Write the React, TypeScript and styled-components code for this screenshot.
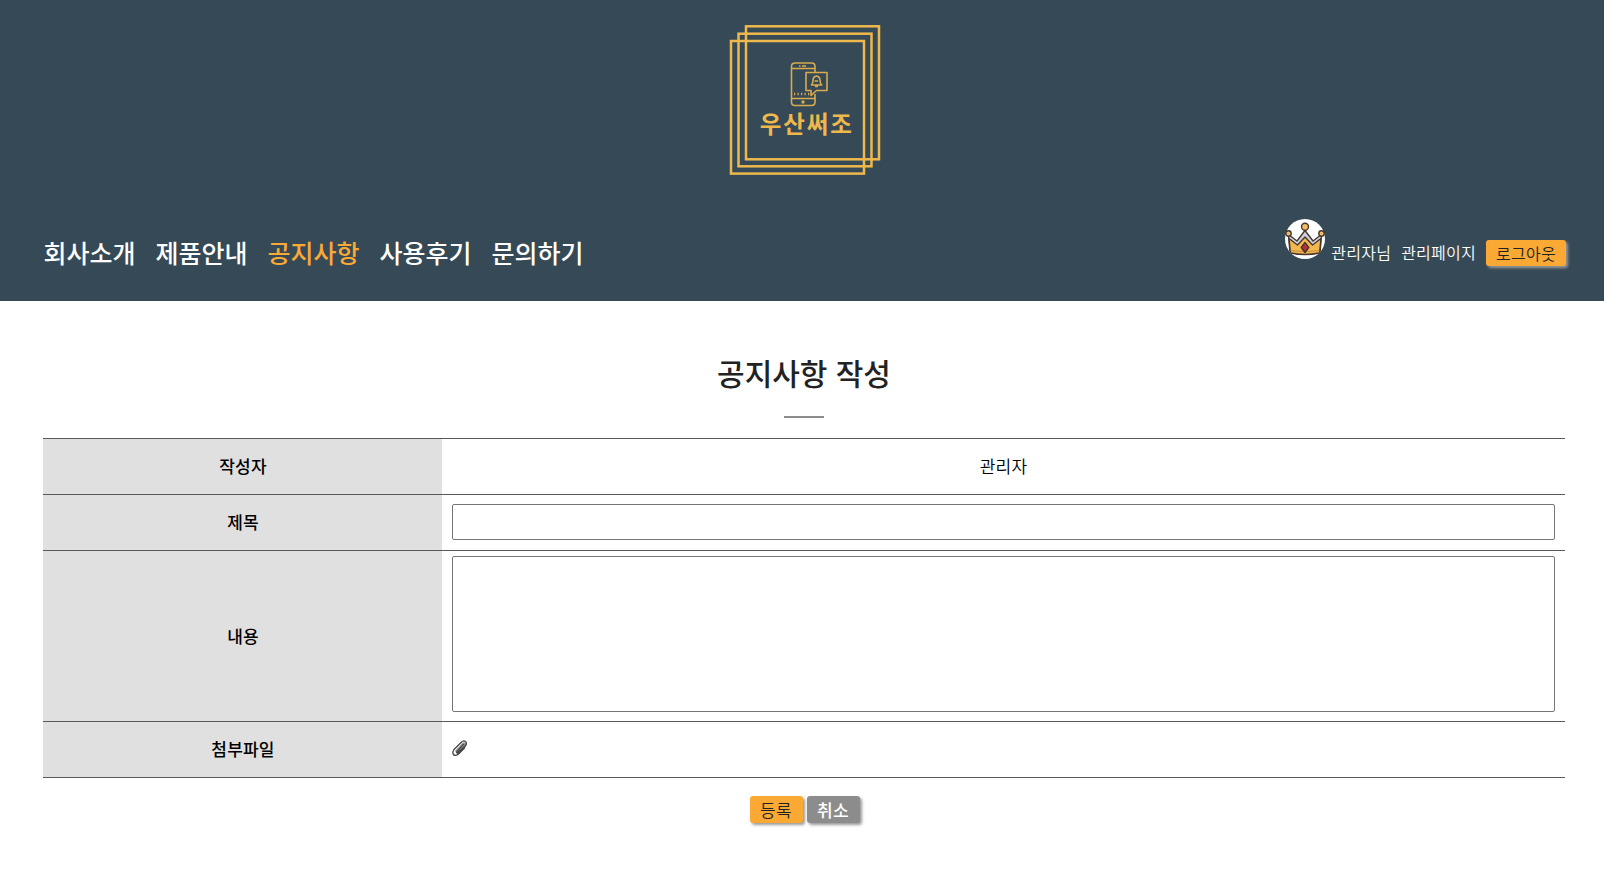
import React from "react";
import styled, { createGlobalStyle } from "styled-components";

const Global = createGlobalStyle`
  * { box-sizing: border-box; }
  body { margin: 0; background: #fff; color: #000; font-family: "Noto Sans CJK KR", "Noto Sans", sans-serif; }
`;
const Page = styled.div`
  min-height: 872px;
  overflow: hidden;
`;
const Header = styled.header`
  height: 301px;
  padding: 15px 38px 0 43px;
  background: #364956;
`;
const LogoLink = styled.div`
  width: 170px;
  height: 170px;
  margin-left: 677px;
  svg { display: block; }
`;
const Bar = styled.div`
  display: flex;
  justify-content: space-between;
  height: 90px;
  margin-top: 34px;
`;
const Menu = styled.nav`
  display: flex;
  gap: 20px;
  padding: 15px 0 0 0.5px;
`;
const MenuItem = styled.a<{ $active?: boolean }>`
  font-size: 25px;
  line-height: 36px;
  font-weight: 500;
  color: ${(p) => (p.$active ? "#faa935" : "#fff")};
`;
const UserArea = styled.div`
  display: flex;
  align-items: flex-start;
  color: #fff;
  font-size: 16px;
  line-height: 24px;
  letter-spacing: 0.25px;
`;
const Avatar = styled.svg`
  width: 40px;
  height: 40px;
  margin-right: 6px;
`;
const UserText = styled.span`
  margin: 21px 10px 0 0;
  font-weight: 350;
`;
const Button = styled.button<{ $tone?: "gray"; $size?: number }>`
  border: 0;
  padding: 0;
  width: ${(p) => (p.$size ? 53 : 80)}px;
  height: ${(p) => (p.$size ? 27 : 26)}px;
  border-radius: 3px;
  font-family: inherit;
  font-size: ${(p) => p.$size ?? 16}px;
  line-height: 24px;
  font-weight: ${(p) => (p.$tone ? 500 : 350)};
  letter-spacing: 0.25px;
  color: ${(p) => (p.$tone ? "#fff" : "#222")};
  background: ${(p) => (p.$tone ? "#8c8c8c" : "#faa935")};
  box-shadow: 2px 2px 3px #999;
`;
const Logout = styled(Button)`
  margin-top: 21px;
  padding-bottom: 1px;
`;
const Main = styled.main`
  padding: 51px 39px 0 43px;
`;
const Title = styled.h1`
  margin: 0;
  text-align: center;
  font-size: 30px;
  line-height: 40px;
  font-weight: 500;
  word-spacing: 1.5px;
  color: #222;
`;
const Rule = styled.div`
  width: 40px;
  height: 2px;
  margin: 24px auto 20px;
  background: #8c8c8c;
`;
const Form = styled.div`
  border-top: 1px solid #58595b;
`;
const Row = styled.div<{ $height: number }>`
  display: flex;
  height: ${(p) => p.$height}px;
  border-bottom: 1px solid #58595b;
`;
const Label = styled.div`
  display: flex;
  align-items: center;
  justify-content: center;
  width: 399px;
  padding: 0 0 2px 1px;
  background: #e0e0e0;
  font-size: 17px;
  font-weight: 500;
  letter-spacing: 0.2px;
`;
const Cell = styled.div<{ $center?: boolean }>`
  flex: 1;
  display: flex;
  align-items: center;
  justify-content: ${(p) => (p.$center ? "center" : "flex-start")};
  padding: 0 10px ${(p) => (p.$center ? 2 : 0)}px;
  font-size: 17px;
  font-weight: 350;
  letter-spacing: 0.2px;
`;
const TitleInput = styled.input`
  width: 100%;
  height: 36px;
  margin-bottom: 1px;
  border: 1px solid #767676;
  border-radius: 2px;
`;
const Content = styled.textarea`
  width: 100%;
  height: 156px;
  margin-bottom: 4px;
  border: 1px solid #767676;
  border-radius: 2px;
  resize: none;
`;
const Clip = styled.svg`
  width: 16px;
  height: 17px;
  margin-bottom: 2px;
`;
const Actions = styled.div`
  display: flex;
  justify-content: center;
  gap: 4px;
  margin: 18px 0 0 1px;
`;

const Logo = () => (
  <svg width="170" height="170" viewBox="0 0 170 170" fill="none" stroke="#efb84c">
    <g strokeWidth="2.500">
      <rect x="26" y="11.300" width="133" height="133" />
      <rect x="18.500" y="18.700" width="133" height="132.600" />
      <rect x="11" y="26" width="133" height="132.600" />
    </g>
    <g strokeWidth="1.600" stroke="#d9ab4d" strokeLinejoin="round">
      <path d="M95 57.5V51.5q0-3.500-3.500-3.500H75q-3.500 0-3.500 3.500V87q0 3.500 3.500 3.500H91.500q3.500 0 3.500-3.500V79M71.500 53.500H95M71.500 83.500H95" />
      <path d="M86 57.500h21v18H96.500L91 80.500V75.500H86z" />
      <path d="M91.500 70q1.500-1.500 1.500-4.500 0-4 3.500-4.500 3.500 0.500 3.500 4.500 0 3 1.800 4.500zM95 71.500h3M94.500 66h3.500" />
      <path d="M74 79h16" strokeWidth="2.500" strokeDasharray="1.200 2.300" />
      <path d="M79 51h1.500M82 51h4" />
      <circle cx="83" cy="87" r="0.900" />
    </g>
    <text x="39.800" y="117.500" fill="#efb84c" stroke="none" fontSize="23.500" fontWeight="700" letterSpacing="1.900" fontFamily="Noto Sans CJK KR, sans-serif">우산써조</text>
  </svg>
);

const Crown = () => (
  <Avatar viewBox="0 0 40 40">
    <defs>
      <clipPath id="disc"><circle cx="20" cy="20" r="20" /></clipPath>
    </defs>
    <circle cx="20" cy="20" r="20" fill="#fff" />
    <g stroke="#49362f" strokeWidth="1.400" strokeLinejoin="round">
      <g clipPath="url(#disc)">
        <path d="M5 34L3.500 15.500 12 22 20 11.500 28 22 36.500 15.500 35 34z" fill="#cfd2dc" />
        <path d="M5.500 34L4 19.500 12.500 26 20 18 27.500 26 36 19.500 34.500 34q-14.500 3-29 0z" fill="#f2b84d" />
        <path d="M5.500 31.500q14.500 2.500 29 0" fill="none" stroke="#c98a38" strokeWidth="0.900" />
        <path d="M20 23.500l3.800 5-3.800 5-3.800-5z" fill="#b72f34" />
      </g>
      <circle cx="20" cy="7.800" r="3.500" fill="#efbd68" />
      <circle cx="3.500" cy="14.500" r="2.700" fill="#efbd68" />
      <circle cx="36.500" cy="14.500" r="2.700" fill="#efbd68" />
    </g>
  </Avatar>
);

const menu = ["회사소개", "제품안내", "공지사항", "사용후기", "문의하기"];

export default function App() {
  return (
    <Page>
      <Global />
      <Header>
        <LogoLink><Logo /></LogoLink>
        <Bar>
          <Menu>
            {menu.map((m) => (
              <MenuItem key={m} $active={m === "공지사항"}>{m}</MenuItem>
            ))}
          </Menu>
          <UserArea>
            <Crown />
            <UserText>관리자님</UserText>
            <UserText>관리페이지</UserText>
            <Logout>로그아웃</Logout>
          </UserArea>
        </Bar>
      </Header>
      <Main>
        <Title>공지사항 작성</Title>
        <Rule />
        <Form>
          <Row $height={56}><Label>작성자</Label><Cell $center>관리자</Cell></Row>
          <Row $height={56}><Label>제목</Label><Cell><TitleInput /></Cell></Row>
          <Row $height={171}><Label>내용</Label><Cell><Content /></Cell></Row>
          <Row $height={56}>
            <Label>첨부파일</Label>
            <Cell>
              <Clip viewBox="0 0 16 17" fill="none" strokeLinecap="round" strokeLinejoin="round">
                <path d="M4.500 11L10.500 4.500Q12 3 13 4T12.500 6.500L6 13.500" stroke="#999" strokeWidth="2.500" />
                <path d="M11.500 4.500L5 11.500Q4 13 5.500 13L13 6Q15.500 3 13.500 1.500T9 2.500L2 9.500Q0 12.500 1.500 14.500T6.500 14L12.500 8" stroke="#444" strokeWidth="1.300" />
              </Clip>
            </Cell>
          </Row>
        </Form>
        <Actions>
          <Button $size={17}>등록</Button>
          <Button $size={17} $tone="gray">취소</Button>
        </Actions>
      </Main>
    </Page>
  );
}
